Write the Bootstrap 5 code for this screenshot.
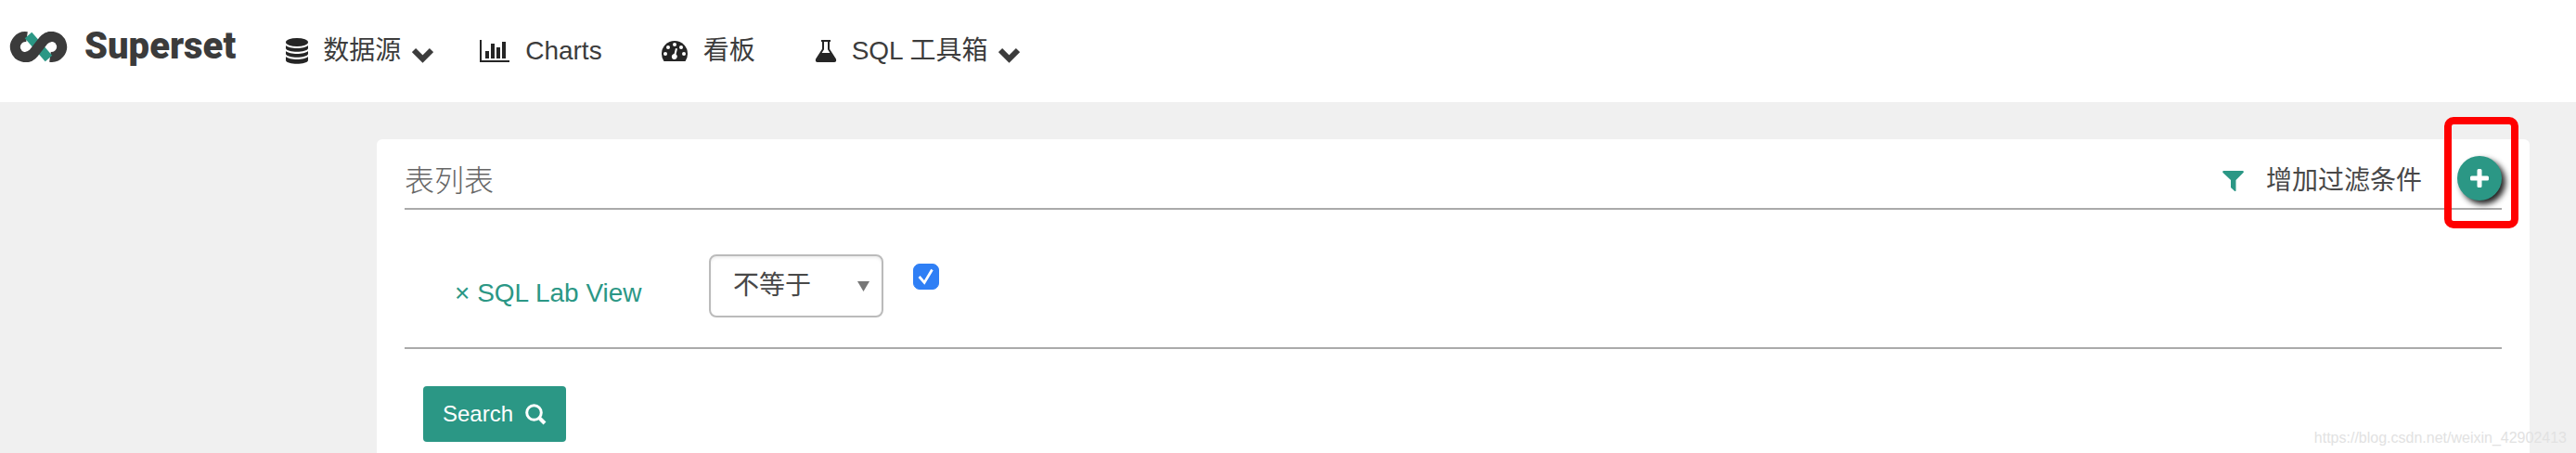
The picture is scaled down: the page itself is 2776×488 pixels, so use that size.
<!DOCTYPE html>
<html lang="zh-CN">
<head>
<meta charset="utf-8">
<meta name="viewport" content="width=device-width, initial-scale=1">
<title>Superset</title>
<link href="https://cdn.jsdelivr.net/npm/bootstrap@5.3.0/dist/css/bootstrap.min.css" rel="stylesheet">
<style>
  :root { --teal: #2b9785; }
  body { background: #f0f0f0; color: #484848; font-family: "Liberation Sans", "Noto Sans CJK SC", sans-serif; font-size: 28px; line-height: 40px; }
  svg { display: block; flex: none; }
  .topbar { height: 110px; padding: 0 10px; background: #fff; }
  .brand { gap: 18px; padding-bottom: 10px; color: #3b3b3b; font-family: Roboto, sans-serif; font-size: 40px; font-weight: 900; }
  .menu { gap: 64px; margin-left: 54px; }
  .menu a { gap: 17px; color: #3c3c3c; }
  .menu .has-menu { gap: 12px; margin-right: -14px; }
  .menu svg { color: #252525; }
  .menu .chevron { color: #3c3c3c; margin-top: 8px; }
  .main-area { padding: 40px 50px 0 406px; }
  .panel { border: 0; border-radius: 6px 6px 0 0; min-height: 338px; padding: 0 30px; }
  .panel-head { height: 76px; padding-top: 10px; border-bottom: 2px solid #aaa; }
  .panel-head h1 { padding-top: 6px; color: #666; font-size: 32px; font-weight: 300; line-height: 40px; }
  .add-filter { padding-top: 6px; margin-right: 38px; color: #484848; gap: 24px; }
  .add-btn { width: 48px; height: 48px; border: 0; border-radius: 50%; background: var(--teal); color: #fff; box-shadow: 4px 4px 6px #222; }
  .callout { inset: -42px -18px -30px -14px; border: 8px solid #f00; border-radius: 10px; pointer-events: none; }
  .filters { height: 150px; padding: 48px 54px 0; border-bottom: 2px solid #aaa; }
  .filter-name { width: 274px; padding-top: 22px; }
  .filter-name a { color: var(--teal); }
  .op-box { width: 188px; }
  .op-box select { width: 100%; height: 68px; appearance: none; border: 2px solid #bbb; border-radius: 8px; background: #fff; color: #484848; padding: 0 24px; line-height: 40px; box-shadow: inset 0 2px 3px #eee; }
  .op-box svg { right: 15px; top: 29px; color: #777; pointer-events: none; }
  .tick { width: 28px; height: 28px; margin: 10px 0 0 32px; border-radius: 6px; }
  .tick:checked { background-color: #2f7ff5; border-color: #2f7ff5; background-image: url("data:image/svg+xml,%3csvg xmlns='http://www.w3.org/2000/svg' viewBox='0 0 28 28'%3e%3cpath fill='none' stroke='%23fff' stroke-width='3' d='M6 14l6 7L21 6'/%3e%3c/svg%3e"); }
  .search-btn { margin: 40px 0 0 20px; height: 60px; padding: 0 21px; gap: 13px; border: 0; border-radius: 4px; background: var(--teal); color: #fff; font-size: 24px; }
  .watermark { right: 10px; bottom: 4px; font-size: 16px; line-height: 24px; color: #e2e2e2; }
</style>
</head>
<body class="position-relative">
<nav class="topbar d-flex align-items-center">
  <a href="#" class="brand d-flex align-items-center text-decoration-none">
    <svg width="63" height="33" viewBox="0 0 63 33" fill="none" stroke="#3b3b3b" stroke-width="11">
      <path d="M19 5.700A11 11 0 1 0 25 24.500"/>
      <path d="M38 8.500A11 11 0 1 1 44 27.300"/>
      <path d="M20.500 4L42.500 29" stroke="#2b9785" stroke-width="10"/>
      <path d="M17 27.500Q22 27.500 26 23.500L37 9.500Q41 5.500 46 5.500"/>
    </svg>
    <span>Superset</span>
  </a>
  <div class="menu d-flex align-items-center">
    <a href="#" class="has-menu d-flex align-items-center text-decoration-none">
      <svg class="me-1" width="24" height="28" viewBox="0 0 24 28" fill="currentColor"><ellipse cx="12" cy="4.500" rx="12" ry="4.500"/><path d="M0 8c4 4 20 4 24 0v3c-1 5-23 5-24 0zM0 14c4 4 20 4 24 0v3c-1 5-23 5-24 0zM0 20c4 4 20 4 24 0v4c-1 5-23 5-24 0z"/></svg>
      数据源
      <svg class="chevron" width="23" height="17" viewBox="0 0 23 17" fill="none" stroke="currentColor" stroke-width="6"><path d="M2 3l9.500 9.500L21 3"/></svg>
    </a>
    <a href="#" class="d-flex align-items-center text-decoration-none">
      <svg width="32" height="24" viewBox="0 0 32 24" fill="currentColor"><path d="M0 0h2v22h30v2H0zM6 12h4v8H6zM12 4h4v16h-4zM18 8h4v12h-4zM24 2h4v18h-4z"/></svg>
      Charts
    </a>
    <a href="#" class="d-flex align-items-center text-decoration-none">
      <svg width="28" height="24" viewBox="0 0 28 24"><path fill="currentColor" d="M14 1a14 14 0 0 1 14 14q0 4-2.200 7.500-.4.500-1 .5H3.200q-.6 0-1-.5Q0 19 0 15A14 14 0 0 1 14 1z"/><g fill="#fff"><circle cx="4" cy="15" r="2"/><circle cx="7" cy="8" r="2"/><circle cx="14" cy="5" r="2"/><circle cx="21" cy="8" r="2"/><circle cx="24" cy="15" r="2"/><path d="M15 9l2 .5-1.500 6a3 3 0 1 1-2-.5z"/></g></svg>
      看板
    </a>
    <a href="#" class="has-menu d-flex align-items-center text-decoration-none">
      <svg class="me-1" width="24" height="24" viewBox="0 0 24 24"><path d="M7 1h10M9 1v9L2 21q-.6 2 1 2h18q1.600 0 1-2L15 10V1" fill="none" stroke="currentColor" stroke-width="2"/><path d="M7 14h10l5 8H2z" fill="currentColor"/></svg>
      SQL 工具箱
      <svg class="chevron" width="23" height="17" viewBox="0 0 23 17" fill="none" stroke="currentColor" stroke-width="6"><path d="M2 3l9.500 9.500L21 3"/></svg>
    </a>
  </div>
</nav>
<main class="main-area">
  <section class="panel card">
    <header class="panel-head d-flex align-items-center justify-content-between">
      <h1 class="mb-0">表列表</h1>
      <div class="d-flex align-items-center">
        <a href="#" class="add-filter d-flex align-items-center text-decoration-none">
          <svg width="23" height="22" viewBox="0 0 23 22" fill="#2b9785"><path d="M1 0h21q1.500.5.500 2L14.500 10v11.500q-.5 1-1.500.2L9 18v-8L.5 2Q-.3.500 1 0z"/></svg>
          增加过滤条件
        </a>
        <div class="position-relative">
          <button type="button" class="add-btn d-flex align-items-center justify-content-center p-0" aria-label="新增"><svg width="20" height="20" viewBox="0 0 20 20" fill="currentColor"><path d="M9 0h2q1.500 0 1.500 1.500v6h6Q20 7.500 20 9v2q0 1.500-1.500 1.500h-6v6Q12.500 20 11 20H9q-1.500 0-1.500-1.500v-6h-6Q0 12.500 0 11V9q0-1.500 1.500-1.500h6v-6Q7.500 0 9 0z"/></svg></button>
          <span class="callout position-absolute"></span>
        </div>
      </div>
    </header>
    <form>
      <div class="filters d-flex align-items-start">
        <div class="filter-name"><a href="#" class="text-decoration-none">× SQL Lab View</a></div>
        <div class="op-box position-relative">
          <select aria-label="条件"><option>不等于</option><option>等于</option></select>
          <svg class="position-absolute" width="13" height="11" viewBox="0 0 13 11" fill="currentColor"><path d="M0 0h13L6.500 11z"/></svg>
        </div>
        <input class="form-check-input tick" type="checkbox" checked aria-label="SQL Lab View">
      </div>
      <button type="button" class="search-btn d-flex align-items-center">Search
        <svg width="23" height="23" viewBox="0 0 23 23" fill="none" stroke="currentColor" stroke-width="3"><circle cx="9.500" cy="9.500" r="7.800"/><path d="M15 15l6 6" stroke-width="4"/></svg>
      </button>
    </form>
  </section>
</main>
<div class="watermark position-absolute">https://blog.csdn.net/weixin_42902413</div>
<script src="https://cdn.jsdelivr.net/npm/bootstrap@5.3.0/dist/js/bootstrap.bundle.min.js"></script>
</body>
</html>
